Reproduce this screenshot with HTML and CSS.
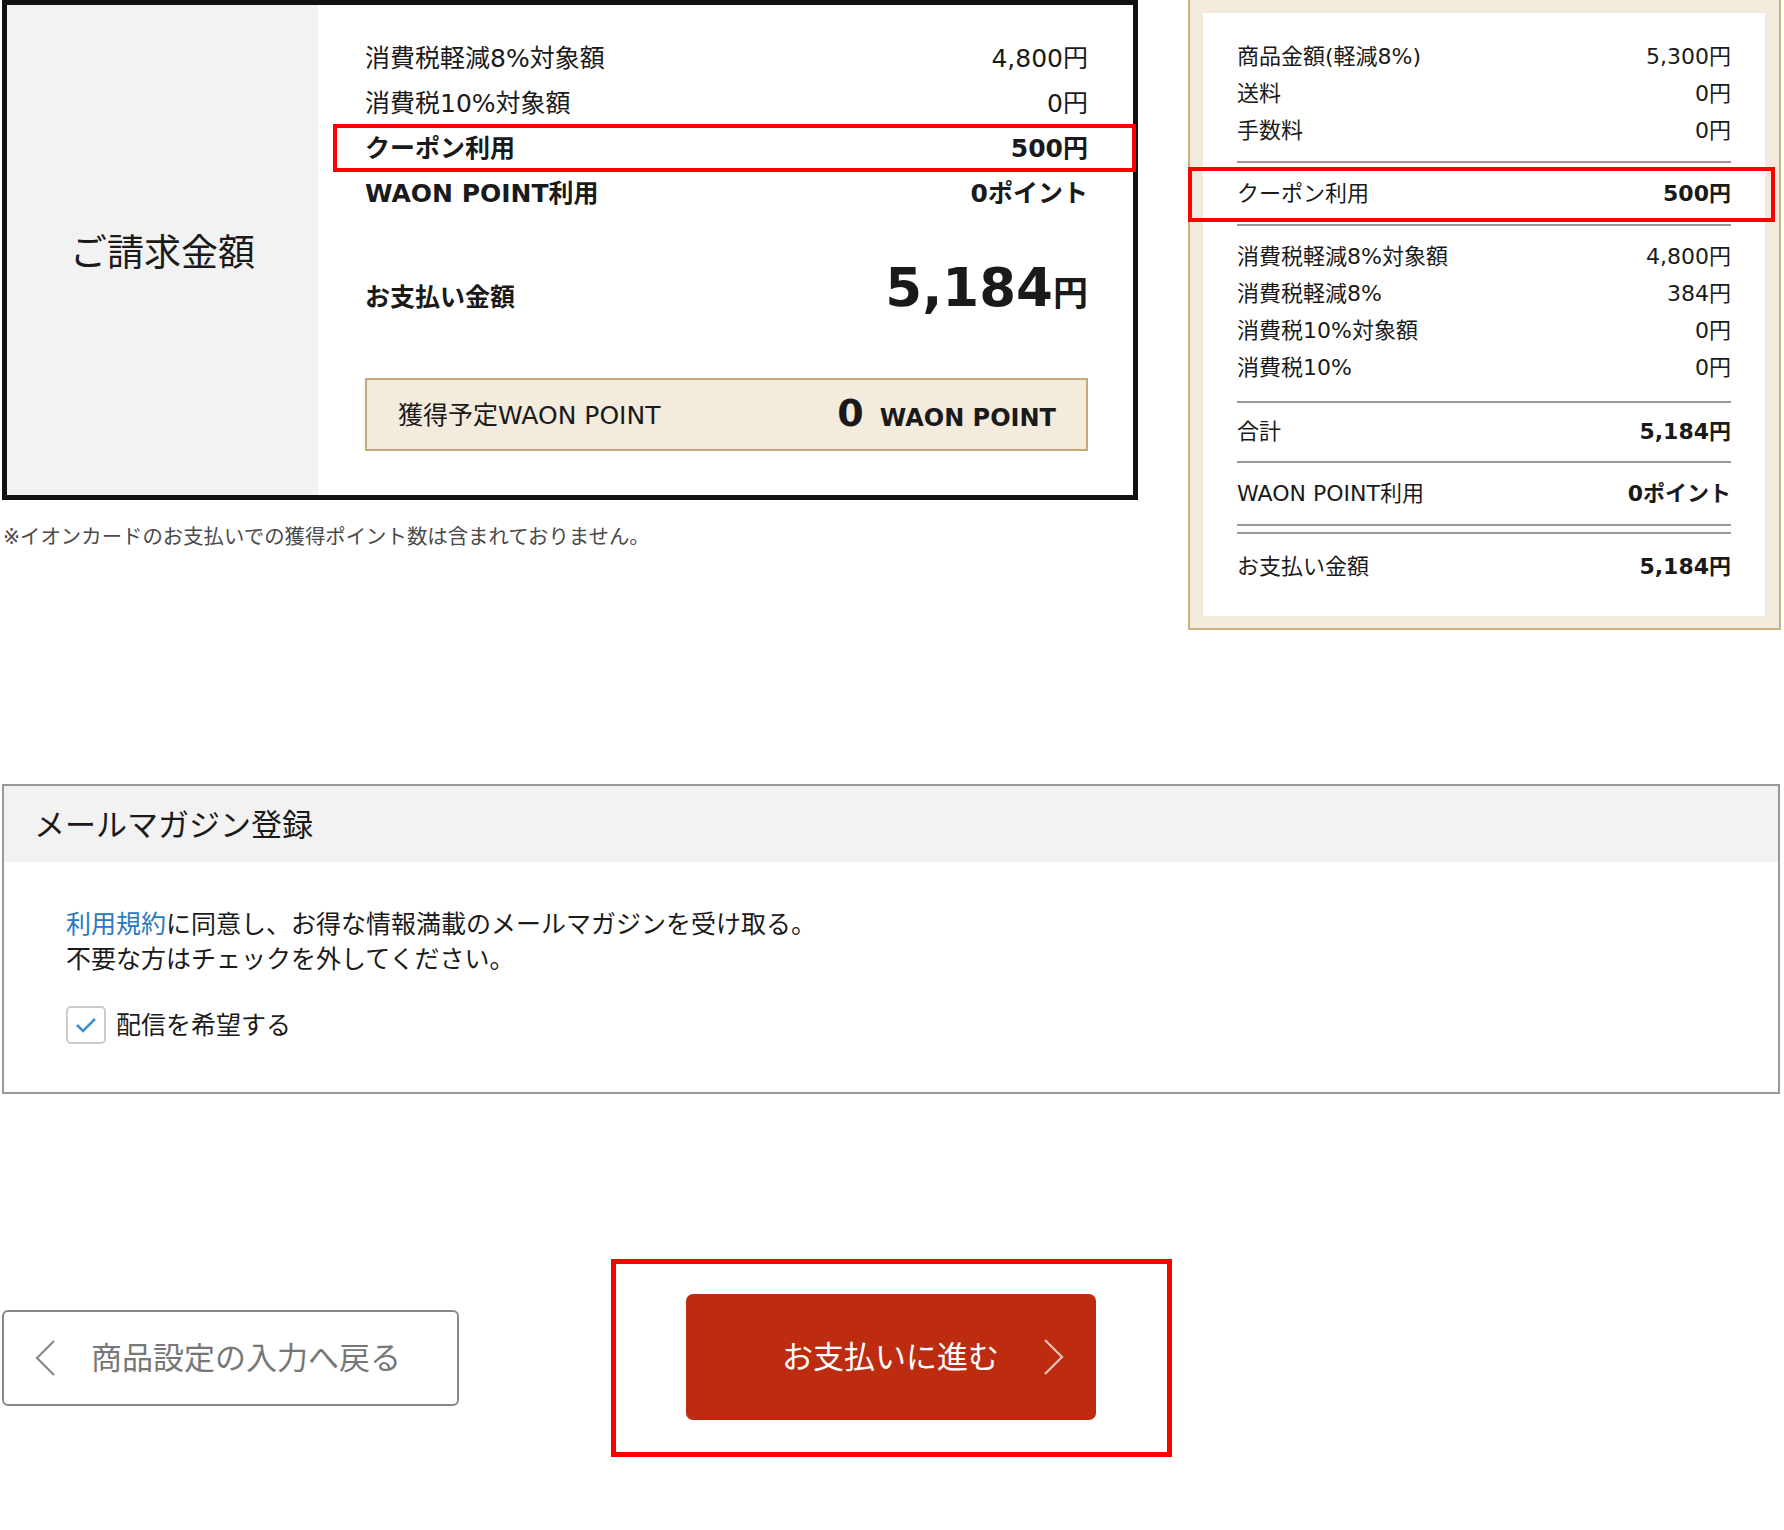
FILE: index.html
```html
<!DOCTYPE html>
<html lang="ja">
<head>
    <meta charset="UTF-8">
    <meta name="viewport" content="width=device-width, initial-scale=1.0">
    <title>ご注文内容の確認</title>
    <link rel="stylesheet" href="styles.css">
</head>
<body>
    <div class="summary">
        <div class="bill-col">
            <div class="bill">
                <div class="bill-head">ご請求金額</div>
                <div class="bill-body">
                    <div class="line"><span>消費税軽減8%対象額</span><span>4,800円</span></div>
                    <div class="line"><span>消費税10%対象額</span><span>0円</span></div>
                    <div class="line bold marked"><span>クーポン利用</span><span>500円</span></div>
                    <div class="line bold"><span>WAON POINT利用</span><span>0ポイント</span></div>
                    <div class="pay">
                        <span class="pay-label">お支払い金額</span>
                        <span class="pay-amount">5,184<small>円</small></span>
                    </div>
                    <div class="earn">
                        <span>獲得予定WAON POINT</span>
                        <span class="earn-value"><b>0</b>WAON POINT</span>
                    </div>
                </div>
            </div>
            <p class="note">※イオンカードのお支払いでの獲得ポイント数は含まれておりません。</p>
        </div>

        <div class="detail">
            <div class="detail-inner">
                <div class="group first">
                    <div class="dl"><span>商品金額(軽減8%)</span><span>5,300円</span></div>
                    <div class="dl"><span>送料</span><span>0円</span></div>
                    <div class="dl"><span>手数料</span><span>0円</span></div>
                </div>
                <div class="group">
                    <div class="dl marked-r"><span>クーポン利用</span><b>500円</b></div>
                </div>
                <div class="group taxes">
                    <div class="dl"><span>消費税軽減8%対象額</span><span>4,800円</span></div>
                    <div class="dl"><span>消費税軽減8%</span><span>384円</span></div>
                    <div class="dl"><span>消費税10%対象額</span><span>0円</span></div>
                    <div class="dl"><span>消費税10%</span><span>0円</span></div>
                </div>
                <div class="group total">
                    <div class="dl"><span>合計</span><b>5,184円</b></div>
                </div>
                <div class="group">
                    <div class="dl"><span>WAON POINT利用</span><b>0ポイント</b></div>
                </div>
                <div class="group last">
                    <div class="dl"><span>お支払い金額</span><b>5,184円</b></div>
                </div>
            </div>
        </div>
    </div>

    <section class="mail">
        <h2 class="mail-title">メールマガジン登録</h2>
        <div class="mail-body">
            <p><a href="#terms">利用規約</a>に同意し、お得な情報満載のメールマガジンを受け取る。</p>
            <p>不要な方はチェックを外してください。</p>
            <label class="check">
                <span class="check-box">
                    <svg width="24" height="20" viewBox="0 0 24 20"><polyline points="3,10 9,16 21,4" fill="none" stroke="#3b8fd2" stroke-width="2.6"/></svg>
                </span>
                配信を希望する
            </label>
        </div>
    </section>

    <div class="actions">
        <a class="back" href="#back">
            <svg width="22" height="38" viewBox="0 0 22 38"><polyline points="20,2 3,19 20,36" fill="none" stroke="#888" stroke-width="2.2"/></svg>
            <span>商品設定の入力へ戻る</span>
        </a>
        <div class="next-wrap">
            <a class="next" href="#pay">
                <span>お支払いに進む</span>
                <svg width="22" height="38" viewBox="0 0 22 38"><polyline points="2,2 19,19 2,36" fill="none" stroke="#f2c4b6" stroke-width="2.2"/></svg>
            </a>
        </div>
    </div>
</body>
</html>
```

FILE: styles.css
```css
* {
    box-sizing: border-box;
    margin: 0;
    padding: 0;
}

body {
    font-family: "DejaVu Sans", "Noto Sans CJK JP", sans-serif;
    color: #1a1a1a;
    background: #fff;
    width: 1784px;
}

a {
    text-decoration: none;
}

/* top: billing box + detail panel */
.summary {
    display: flex;
    align-items: flex-start;
    padding-left: 2px;
}

.bill-col {
    width: 1136px;
}

.bill {
    display: flex;
    height: 500px;
    border: 5px solid #111;
}

.bill-head {
    width: 311px;
    background: #f2f2f2;
    display: flex;
    align-items: center;
    justify-content: center;
    font-size: 37px;
}

.bill-body {
    flex: 1;
    padding: 31px 45px 0 47px;
}

.line {
    display: flex;
    justify-content: space-between;
    font-size: 25px;
    line-height: 45px;
}

.bold {
    font-weight: bold;
}

.marked,
.marked-r {
    position: relative;
}

.marked::after {
    content: "";
    position: absolute;
    left: -32px;
    right: -48px;
    top: -2px;
    bottom: -1px;
    border: 4px solid #f00;
}

.pay {
    display: flex;
    justify-content: space-between;
    align-items: baseline;
    margin-top: 40px;
    font-weight: bold;
}

.pay-label {
    font-size: 25px;
}

.pay-amount {
    font-size: 53px;
    line-height: 64px;
}

.pay-amount small {
    font-size: 35px;
}

.earn {
    display: flex;
    align-items: center;
    justify-content: space-between;
    height: 73px;
    margin-top: 52px;
    padding: 0 30px 4px 31px;
    background: #f3ebdb;
    border: 2px solid #c4aa7b;
    font-size: 25px;
}

.earn-value {
    display: flex;
    align-items: baseline;
    gap: 16px;
    font-size: 24px;
    font-weight: bold;
}

.earn-value b {
    font-size: 38px;
}

.note {
    margin-top: 23px;
    padding-left: 1px;
    font-size: 20.4px;
    line-height: 28px;
    color: #4a4a4a;
}

.detail {
    width: 593px;
    margin-left: 50px;
    padding: 13px 14px 12px 13px;
    background: #f2eada;
    border: 2px solid #c8b185;
    border-top: 0;
}

.detail-inner {
    background: #fff;
    padding: 25px 34px 29px;
}

.group {
    padding: 12px 0;
    border-bottom: 2px solid #999;
}

.group.first {
    padding-top: 0;
}

.group.taxes {
    padding-bottom: 15px;
}

.group.total {
    padding: 10px 0 11px;
}

.group.last {
    border-top: 2px solid #999;
    border-bottom: 0;
    margin-top: 6px;
    padding: 14px 0 2px;
}

.dl {
    display: flex;
    justify-content: space-between;
    font-size: 22px;
    line-height: 37px;
}

.marked-r::after {
    content: "";
    position: absolute;
    left: -49px;
    right: -44px;
    top: -8px;
    bottom: -10px;
    border: 4px solid #f00;
}

/* mail magazine */
.mail {
    width: 1778px;
    margin: 154px 0 0 2px;
    border: 2px solid #999;
}

.mail-title {
    display: flex;
    align-items: center;
    height: 76px;
    padding: 0 0 4px 30px;
    background: #f2f2f2;
    font-size: 31px;
    font-weight: normal;
}

.mail-body {
    padding: 45px 62px 48px;
    font-size: 25px;
    line-height: 35px;
}

.mail-body a {
    color: #2a78c0;
}

.check {
    display: flex;
    align-items: center;
    gap: 10px;
    margin-top: 29px;
}

.check-box {
    width: 40px;
    height: 38px;
    border: 2px solid #ccc;
    border-radius: 5px;
    display: flex;
    align-items: center;
    justify-content: center;
}

/* buttons */
.actions {
    display: flex;
    align-items: center;
    margin-top: 165px;
    padding-left: 2px;
}

.back {
    display: flex;
    align-items: center;
    gap: 35px;
    width: 457px;
    height: 96px;
    padding: 0 0 6px 30px;
    border: 2px solid #888;
    border-radius: 6px;
    color: #777;
    font-size: 31px;
}

.back svg {
    margin-top: 6px;
}

.next-wrap {
    margin-left: 152px;
    padding: 30px 71px 32px 70px;
    border: 5px solid #f00;
}

.next {
    display: flex;
    align-items: center;
    gap: 44px;
    width: 410px;
    height: 126px;
    padding: 0 0 5px 96px;
    background: #bd2c10;
    border-radius: 7px;
    color: #fff;
    font-size: 31px;
}

.next svg {
    margin-top: 5px;
}
```
